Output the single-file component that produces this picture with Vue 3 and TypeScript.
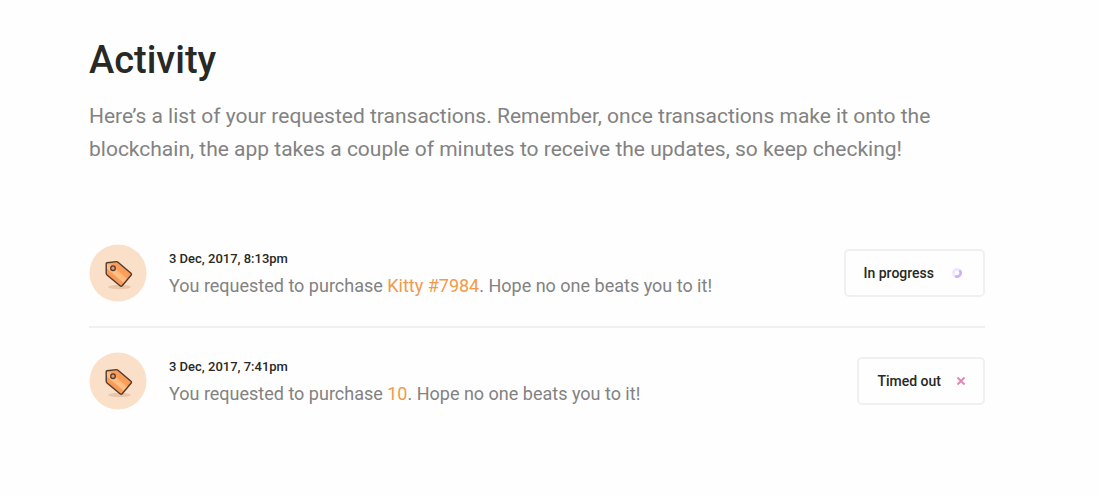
<script setup lang="ts">
interface Activity {
  id: number
  time: string
  subject: string
  status: 'progress' | 'timeout'
  label: string
}

const activities: Activity[] = [
  { id: 1, time: '3 Dec, 2017, 8:13pm', subject: 'Kitty #7984', status: 'progress', label: 'In progress' },
  { id: 2, time: '3 Dec, 2017, 7:41pm', subject: '10', status: 'timeout', label: 'Timed out' },
]
</script>

<template>
  <main class="page">
    <h1 class="title">Activity</h1>
    <p class="intro">
      Here’s a list of your requested transactions. Remember, once transactions make it onto the
      blockchain, the app takes a couple of minutes to receive the updates, so keep checking!
    </p>

    <ul class="list">
      <li v-for="item in activities" :key="item.id" class="item">
        <svg class="avatar" viewBox="0 0 58 58" aria-hidden="true">
          <defs>
            <linearGradient :id="`tag-${item.id}`" x1="0.1" y1="0.9" x2="0.8" y2="0.1">
              <stop offset="0" stop-color="#f58a45" />
              <stop offset="0.38" stop-color="#fa9f5c" />
              <stop offset="0.42" stop-color="#ffc38a" />
              <stop offset="0.58" stop-color="#ffb877" />
              <stop offset="0.62" stop-color="#fb9f5b" />
              <stop offset="1" stop-color="#f99a55" />
            </linearGradient>
          </defs>
          <circle cx="29" cy="29" r="28.5" fill="#fbe0c9" />
          <ellipse cx="30.5" cy="43" rx="11.5" ry="2.2" fill="#e7c6ac" />
          <path
            d="M18 18.8 27.5 17.6Q28.2 17.5 29 18.2L42 29.2Q43 30 42.2 31L33.2 41.8Q32.2 42.8 31 41.8L18 31Q17.2 30.2 17.2 29V19.8Q17.2 18.9 18 18.8Z"
            :fill="`url(#tag-${item.id})`"
            stroke="#503a2e"
            stroke-width="1.4"
            stroke-linejoin="round"
          />
          <circle cx="24" cy="24.2" r="2.3" fill="#d9a07b" stroke="#503a2e" stroke-width="1.3" />
        </svg>

        <div class="details">
          <time class="time">{{ item.time }}</time>
          <p class="message">
            You requested to purchase <a class="link" href="#">{{ item.subject }}</a>. Hope no one beats you to it!
          </p>
        </div>

        <div class="status" :class="item.status">
          <span>{{ item.label }}</span>
          <svg v-if="item.status === 'progress'" class="icon" viewBox="0 0 10 10" aria-hidden="true">
            <circle cx="5" cy="5" r="3.6" fill="none" stroke="#eee5fc" stroke-width="2.6" />
            <path d="M7.4 2.3A3.6 3.6 0 0 1 3.2 8.1" fill="none" stroke="#cdb0f2" stroke-width="2.4" />
          </svg>
          <svg v-else class="icon" viewBox="0 0 10 10" aria-hidden="true">
            <path d="M1.5 1.5 8.5 8.5M8.5 1.5 1.5 8.5" fill="none" stroke="#e283b5" stroke-width="1.8" />
          </svg>
        </div>
      </li>
    </ul>
  </main>
</template>

<style>
body {
  margin: 0;
  background: #fefefe;
}
</style>

<style scoped>
.page {
  padding: 36px 114px 48px 89px;
  color: #282825;
  font-family: Roboto, "Liberation Sans", sans-serif;
}

.title {
  margin: 0;
  font-size: 38px;
  font-weight: 500;
  line-height: 48px;
}

.intro {
  margin: 16px 0 0;
  color: #828282;
  font-size: 21px;
  line-height: 33px;
}

.list {
  margin: 54px 0 0;
  padding: 0;
  list-style: none;
}

.item {
  display: flex;
  align-items: center;
  padding: 24px 0;
}

.item + .item {
  border-top: 2px solid #f0f0ee;
}

.avatar {
  width: 58px;
  height: 58px;
  flex: none;
}

.details {
  flex: 1;
  margin-left: 22px;
  padding-top: 2px;
}

.time {
  display: block;
  font-size: 13px;
  font-weight: 500;
  line-height: 24px;
}

.message {
  margin: 0;
  color: #828282;
  font-size: 18px;
  line-height: 30px;
}

.link {
  color: #f2994a;
  text-decoration: none;
}

.status {
  display: flex;
  align-items: center;
  box-sizing: border-box;
  height: 48px;
  padding: 0 18px;
  border: 2px solid #f0f0ee;
  border-radius: 5px;
  font-size: 14px;
  font-weight: 500;
  white-space: nowrap;
}

.progress {
  gap: 18px;
  padding-right: 21px;
}

.timeout {
  gap: 15px;
  padding-right: 17px;
}

.icon {
  width: 10px;
  height: 10px;
}
</style>
